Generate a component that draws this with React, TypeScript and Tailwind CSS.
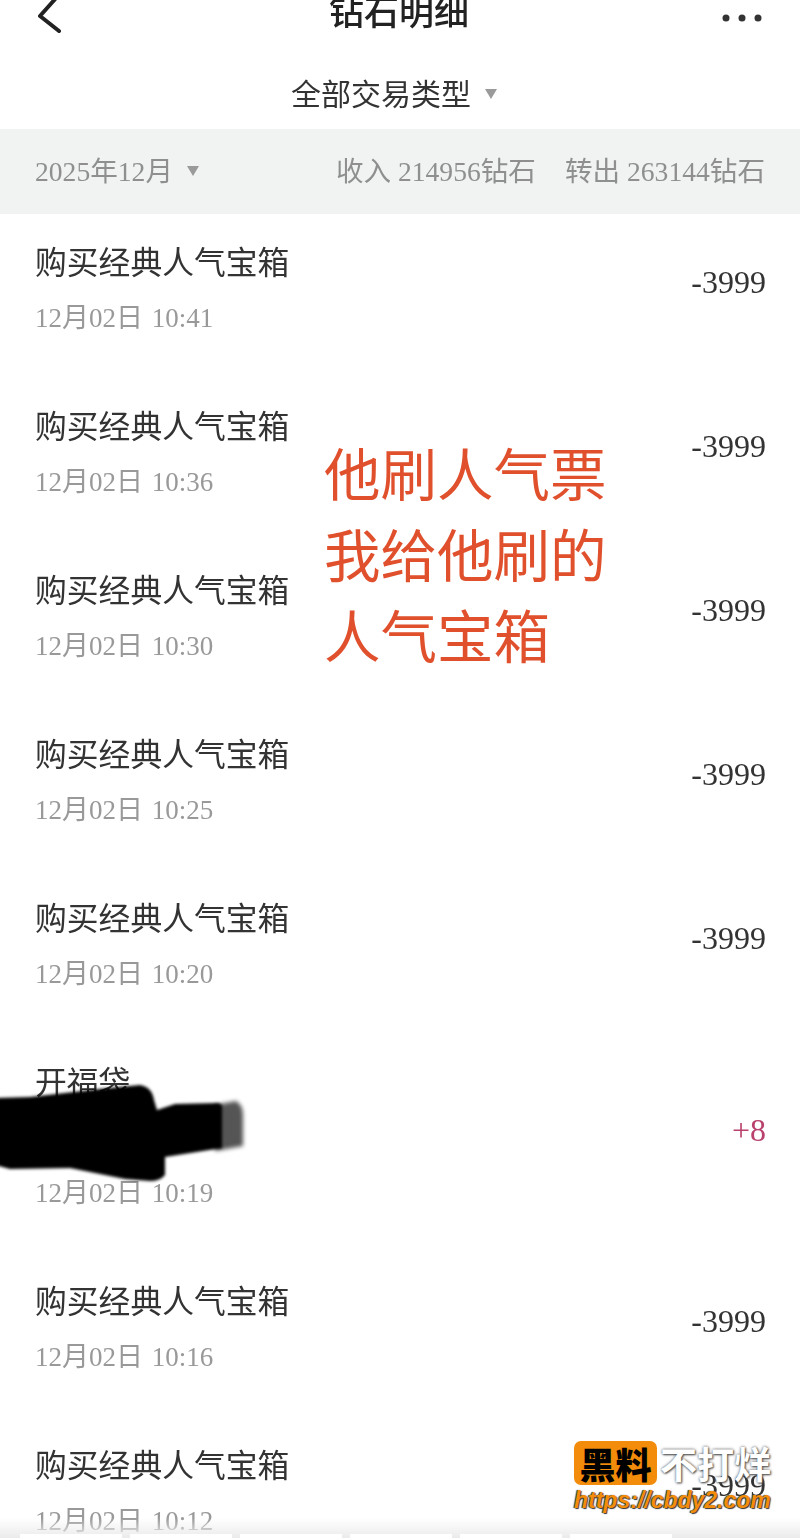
const FONT = "[font-family:'Liberation_Serif','Noto_Sans_CJK_SC',serif]";

type Row = { title: string; date: string; amount: string; tall?: boolean; income?: boolean };

const rows: Row[] = [
	{ title: "购买经典人气宝箱", date: "12月02日 10:41", amount: "-3999" },
	{ title: "购买经典人气宝箱", date: "12月02日 10:36", amount: "-3999" },
	{ title: "购买经典人气宝箱", date: "12月02日 10:30", amount: "-3999" },
	{ title: "购买经典人气宝箱", date: "12月02日 10:25", amount: "-3999" },
	{ title: "购买经典人气宝箱", date: "12月02日 10:20", amount: "-3999" },
	{ title: "开福袋", date: "12月02日 10:19", amount: "+8", tall: true, income: true },
	{ title: "购买经典人气宝箱", date: "12月02日 10:16", amount: "-3999" },
	{ title: "购买经典人气宝箱", date: "12月02日 10:12", amount: "-3999" },
];

function Caret() {
	return (
		<svg width="14" height="12" viewBox="0 0 14 12" className="shrink-0">
			<path d="M1 1h12L7 11z" fill="#9a9a9a" />
		</svg>
	);
}

function TxRow({ row }: { row: Row }) {
	return (
		<div className="flex items-center justify-between pl-[35px] pr-[34px] pt-[30px] pb-[43px]">
			<div className="flex flex-col">
				<div className="text-[31.8px] leading-[40px] text-[#333]">{row.title}</div>
				{row.tall && <div className="h-[55px]" />}
				<div className="mt-[17px] text-[27px] leading-[34px] text-[#999] [word-spacing:2px]">{row.date}</div>
			</div>
			<div className={`mb-[15px] text-[32px] leading-[40px] ${row.income ? "text-[#b9416d]" : "text-[#333]"}`}>{row.amount}</div>
		</div>
	);
}

export default function App() {
	return (
		<div className={`relative h-[1538px] w-[800px] overflow-hidden bg-white ${FONT}`}>
			<div className="blur-[0.6px]">
				{/* Nav bar, cut off by the top of the screenshot */}
				<div className="grid h-[28px] grid-cols-3 grid-rows-[28px] items-center pl-[36px] pr-[38px]">
					<svg width="28" height="28" viewBox="0 0 28 28" className="overflow-visible" fill="none" stroke="#222" strokeWidth="4" strokeLinecap="round" strokeLinejoin="round">
						<path d="M21 -3 L4 16 L23 31" />
					</svg>
					<div className="text-center text-[35px] font-medium leading-[28px] text-[#222]">钻石明细</div>
					<svg width="40" height="8" viewBox="0 0 40 8" className="mt-[8px] justify-self-end" fill="#333">
						<circle cx="4" cy="4" r="3.5" />
						<circle cx="20" cy="4" r="3.5" />
						<circle cx="36" cy="4" r="3.5" />
					</svg>
				</div>

				{/* Type filter */}
				<div className="flex h-[101px] items-center justify-center gap-[13px] pt-[31px] pr-[11px] text-[30px] text-[#333]">
					<span>全部交易类型</span>
					<Caret />
				</div>

				{/* Month summary */}
				<div className="flex h-[85px] items-center justify-between bg-[#f1f3f3] pl-[35px] pr-[35px] text-[27.6px] text-[#8f8f8f]">
					<div className="flex items-center gap-[13px]">
						<span>2025年12月</span>
						<Caret />
					</div>
					<div className="flex gap-[29px]">
						<span>收入 214956钻石</span>
						<span>转出 263144钻石</span>
					</div>
				</div>

				{rows.map((row, i) => (
					<TxRow key={i} row={row} />
				))}
			</div>

			{/* Handwritten note over the list */}
			<div className="absolute left-[324px] top-[431px] text-[56.5px] leading-[81px] text-[#e0502c] [font-family:'Noto_Sans_CJK_SC',sans-serif]">
				<div>他刷人气票</div>
				<div>我给他刷的</div>
				<div>人气宝箱</div>
			</div>

			{/* Redaction scribble */}
			<svg className="absolute left-0 top-[1075px]" width="250" height="115" viewBox="0 0 250 115">
				<path d="M215 30 L236 26 Q243 30 243 40 L243 71 L215 76 Z" fill="#555" className="blur-[2px]" />
				<path d="M-5 23 L30 22 L100 14 L140 10 Q152 12 154 25 L157 35 L175 29 L218 28 L222 30 L222 73 L165 82 L165 100 Q160 106 150 106 L125 104 L70 93 L10 94 L-5 90 Z" fill="#000" className="blur-[1.5px]" />
			</svg>

			{/* Bottom edge of the screenshot */}
			<div className="absolute inset-x-0 bottom-0 flex h-[20px] items-end gap-[8px] bg-gradient-to-b from-transparent to-[#ebebeb] pl-[20px]">
				{[0, 1, 2, 3, 4, 5].map((i) => (
					<div key={i} className="h-[4px] w-[102px] bg-white" />
				))}
			</div>

			{/* Site watermark */}
			<div className="absolute left-[574px] top-[1441px] flex w-[200px] flex-col">
				<div className="flex items-center gap-[3px]">
					<div className="flex h-[44px] w-[83px] items-center justify-center rounded-[7px] bg-[#f28c0a] text-[36px] font-black leading-none text-black [font-family:'Noto_Sans_CJK_SC',sans-serif]">
						黑料
					</div>
					<div className="text-[37px] font-bold leading-none text-white [font-family:'Noto_Sans_CJK_SC',sans-serif] [text-shadow:0_0_3px_#555,1px_1px_2px_#555]">
						不打烊
					</div>
				</div>
				<div className="mt-[1px] whitespace-nowrap text-[23px] font-bold italic leading-[28px] text-[#f28c0a] [font-family:'Liberation_Sans',sans-serif] [text-shadow:1px_1px_1px_#333,-1px_0_1px_#333]">
					https://cbdy2.com
				</div>
			</div>
		</div>
	);
}
